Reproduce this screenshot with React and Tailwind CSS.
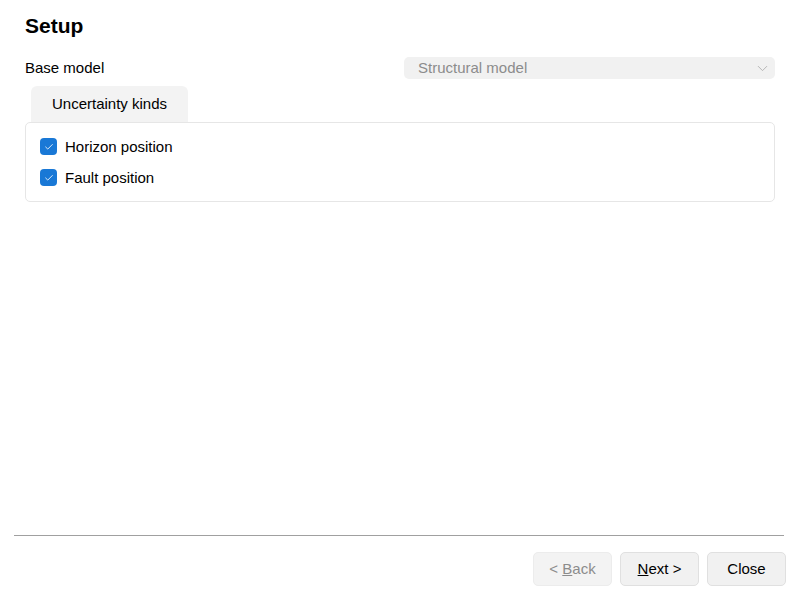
import { Check, ChevronDown } from "lucide-react";

const kinds = ["Horizon position", "Fault position"];

function Checkbox({ label }) {
  return (
    <label className="flex h-[31px] items-center gap-[8px]">
      <span className="flex h-[17px] w-[17px] items-center justify-center rounded-[4px] bg-[#1978d6]">
        <Check className="h-[10px] w-[10px] text-white" strokeWidth={2} />
      </span>
      <span className="text-[15px] leading-[22px] text-black">{label}</span>
    </label>
  );
}

export default function App() {
  return (
    <div
      className="flex h-[600px] w-[800px] flex-col bg-white text-black"
      style={{ fontFamily: '"Liberation Sans", Arial, sans-serif' }}
    >
      <div className="px-[25px]">
        <h1 className="mt-[14px] text-[21px] font-bold leading-[24px]">Setup</h1>

        <div className="mt-[19px] flex h-[22px] items-center justify-between">
          <span className="text-[15px] leading-[22px]">Base model</span>
          <div className="flex h-[22px] w-[371px] items-center justify-between rounded-[5px] bg-[#f1f1f1] pl-[14px] pr-[4px]">
            <span className="text-[15px] leading-[22px] text-[#8c8c8c]">Structural model</span>
            <ChevronDown className="h-[17px] w-[17px] text-[#b0b0b0]" strokeWidth={1.3} />
          </div>
        </div>

        <div className="mt-[7px] flex">
          <div className="ml-[6px] h-[36px] rounded-t-[6px] bg-[#f3f3f3] px-[21px] text-[15px] leading-[36px]">
            Uncertainty kinds
          </div>
        </div>

        <div className="rounded-[5px] border border-[#e6e6e6] px-[14px] py-[8px]">
          {kinds.map((k) => (
            <Checkbox key={k} label={k} />
          ))}
        </div>
      </div>

      <div className="flex-1" />

      <div className="ml-[14px] mr-[16px] h-px bg-[#a0a0a0]" />
      <div className="flex justify-end gap-[8px] pb-[14px] pr-[14px] pt-[16px] text-[15px]">
        <button className="h-[34px] w-[79px] rounded-[5px] border border-[#ececec] bg-[#f3f3f3] text-[#8c8c8c]">
          &lt; <span className="underline">B</span>ack
        </button>
        <button className="h-[34px] w-[79px] rounded-[5px] border border-[#e0e0e0] bg-[#f1f1f1] text-black">
          <span className="underline">N</span>ext &gt;
        </button>
        <button className="h-[34px] w-[79px] rounded-[5px] border border-[#e0e0e0] bg-[#f1f1f1] text-black">
          Close
        </button>
      </div>
    </div>
  );
}
